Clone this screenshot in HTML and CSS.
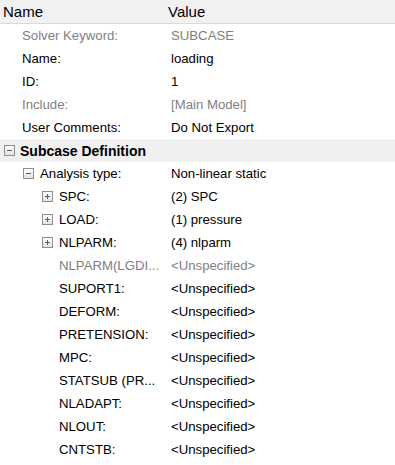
FILE: index.html
```html
<!DOCTYPE html>
<html lang="en">
<head>
    <meta charset="UTF-8">
    <title>Subcase properties</title>
    <link rel="stylesheet" href="styles.css">
</head>
<body>
    <div class="grid">
        <div class="head">
            <div class="col-name">Name</div>
            <div class="col-value">Value</div>
        </div>

        <div class="row dim"><div class="label lvl0">Solver Keyword:</div><div class="value">SUBCASE</div></div>
        <div class="row"><div class="label lvl0">Name:</div><div class="value">loading</div></div>
        <div class="row"><div class="label lvl0">ID:</div><div class="value">1</div></div>
        <div class="row dim"><div class="label lvl0">Include:</div><div class="value">[Main Model]</div></div>
        <div class="row"><div class="label lvl0">User Comments:</div><div class="value">Do Not Export</div></div>

        <!-- groupe -->
        <div class="row group">
            <div class="label"><span class="tog minus"></span>Subcase Definition</div>
        </div>

        <div class="row"><div class="label lvl1"><span class="tog minus"></span>Analysis type:</div><div class="value">Non-linear static</div></div>
        <div class="row"><div class="label lvl2"><span class="tog plus"></span>SPC:</div><div class="value">(2) SPC</div></div>
        <div class="row"><div class="label lvl2"><span class="tog plus"></span>LOAD:</div><div class="value">(1) pressure</div></div>
        <div class="row"><div class="label lvl2"><span class="tog plus"></span>NLPARM:</div><div class="value">(4) nlparm</div></div>
        <div class="row dim"><div class="label lvl3">NLPARM(LGDI...</div><div class="value">&lt;Unspecified&gt;</div></div>
        <div class="row"><div class="label lvl3">SUPORT1:</div><div class="value">&lt;Unspecified&gt;</div></div>
        <div class="row"><div class="label lvl3">DEFORM:</div><div class="value">&lt;Unspecified&gt;</div></div>
        <div class="row"><div class="label lvl3">PRETENSION:</div><div class="value">&lt;Unspecified&gt;</div></div>
        <div class="row"><div class="label lvl3">MPC:</div><div class="value">&lt;Unspecified&gt;</div></div>
        <div class="row"><div class="label lvl3">STATSUB (PR...</div><div class="value">&lt;Unspecified&gt;</div></div>
        <div class="row"><div class="label lvl3">NLADAPT:</div><div class="value">&lt;Unspecified&gt;</div></div>
        <div class="row"><div class="label lvl3">NLOUT:</div><div class="value">&lt;Unspecified&gt;</div></div>
        <div class="row"><div class="label lvl3">CNTSTB:</div><div class="value">&lt;Unspecified&gt;</div></div>
    </div>
</body>
</html>
```

FILE: styles.css
```css
body {
    margin: 0;
    background: #ffffff;
    font-family: "Liberation Sans", Arial, sans-serif;
    font-size: 13.2px;
    color: #000000;
}

.grid {
    width: 395px;
}

/* En-tête des colonnes */
.head {
    display: flex;
    height: 23px;
    align-items: center;
    background: #f1f1f1;
    border-bottom: 1px solid #d6dbe5;
    font-size: 15px;
}

.col-name {
    width: 165px;
    padding-left: 3px;
}

.col-value {
    flex: 1;
}

.row {
    display: flex;
    align-items: center;
    height: 23px;
}

.label {
    width: 171px;
    box-sizing: border-box;
    display: flex;
    align-items: center;
    white-space: nowrap;
}

.value {
    flex: 1;
    white-space: nowrap;
}

.dim {
    color: #7f7f7f;
}

.lvl0 { padding-left: 22px; }
.lvl1 { padding-left: 23px; }
.lvl2 { padding-left: 42px; }
.lvl3 { padding-left: 59px; }

.group {
    background: #f0f0f0;
    font-weight: bold;
    font-size: 14px;
}

.group .label {
    padding-left: 4px;
}

.group .tog {
    margin-right: 5px;
}

/* Boutons +/- de l'arbre */
.tog {
    position: relative;
    width: 9px;
    height: 9px;
    border: 1px solid #8e8f8f;
    background: linear-gradient(#ffffff, #e2e2e2);
    margin-right: 6px;
    flex-shrink: 0;
}

.tog::before {
    content: "";
    position: absolute;
    left: 2px;
    top: 4px;
    width: 5px;
    height: 1px;
    background: #4d6185;
}

.tog.plus::after {
    content: "";
    position: absolute;
    left: 4px;
    top: 2px;
    width: 1px;
    height: 5px;
    background: #4d6185;
}
```
